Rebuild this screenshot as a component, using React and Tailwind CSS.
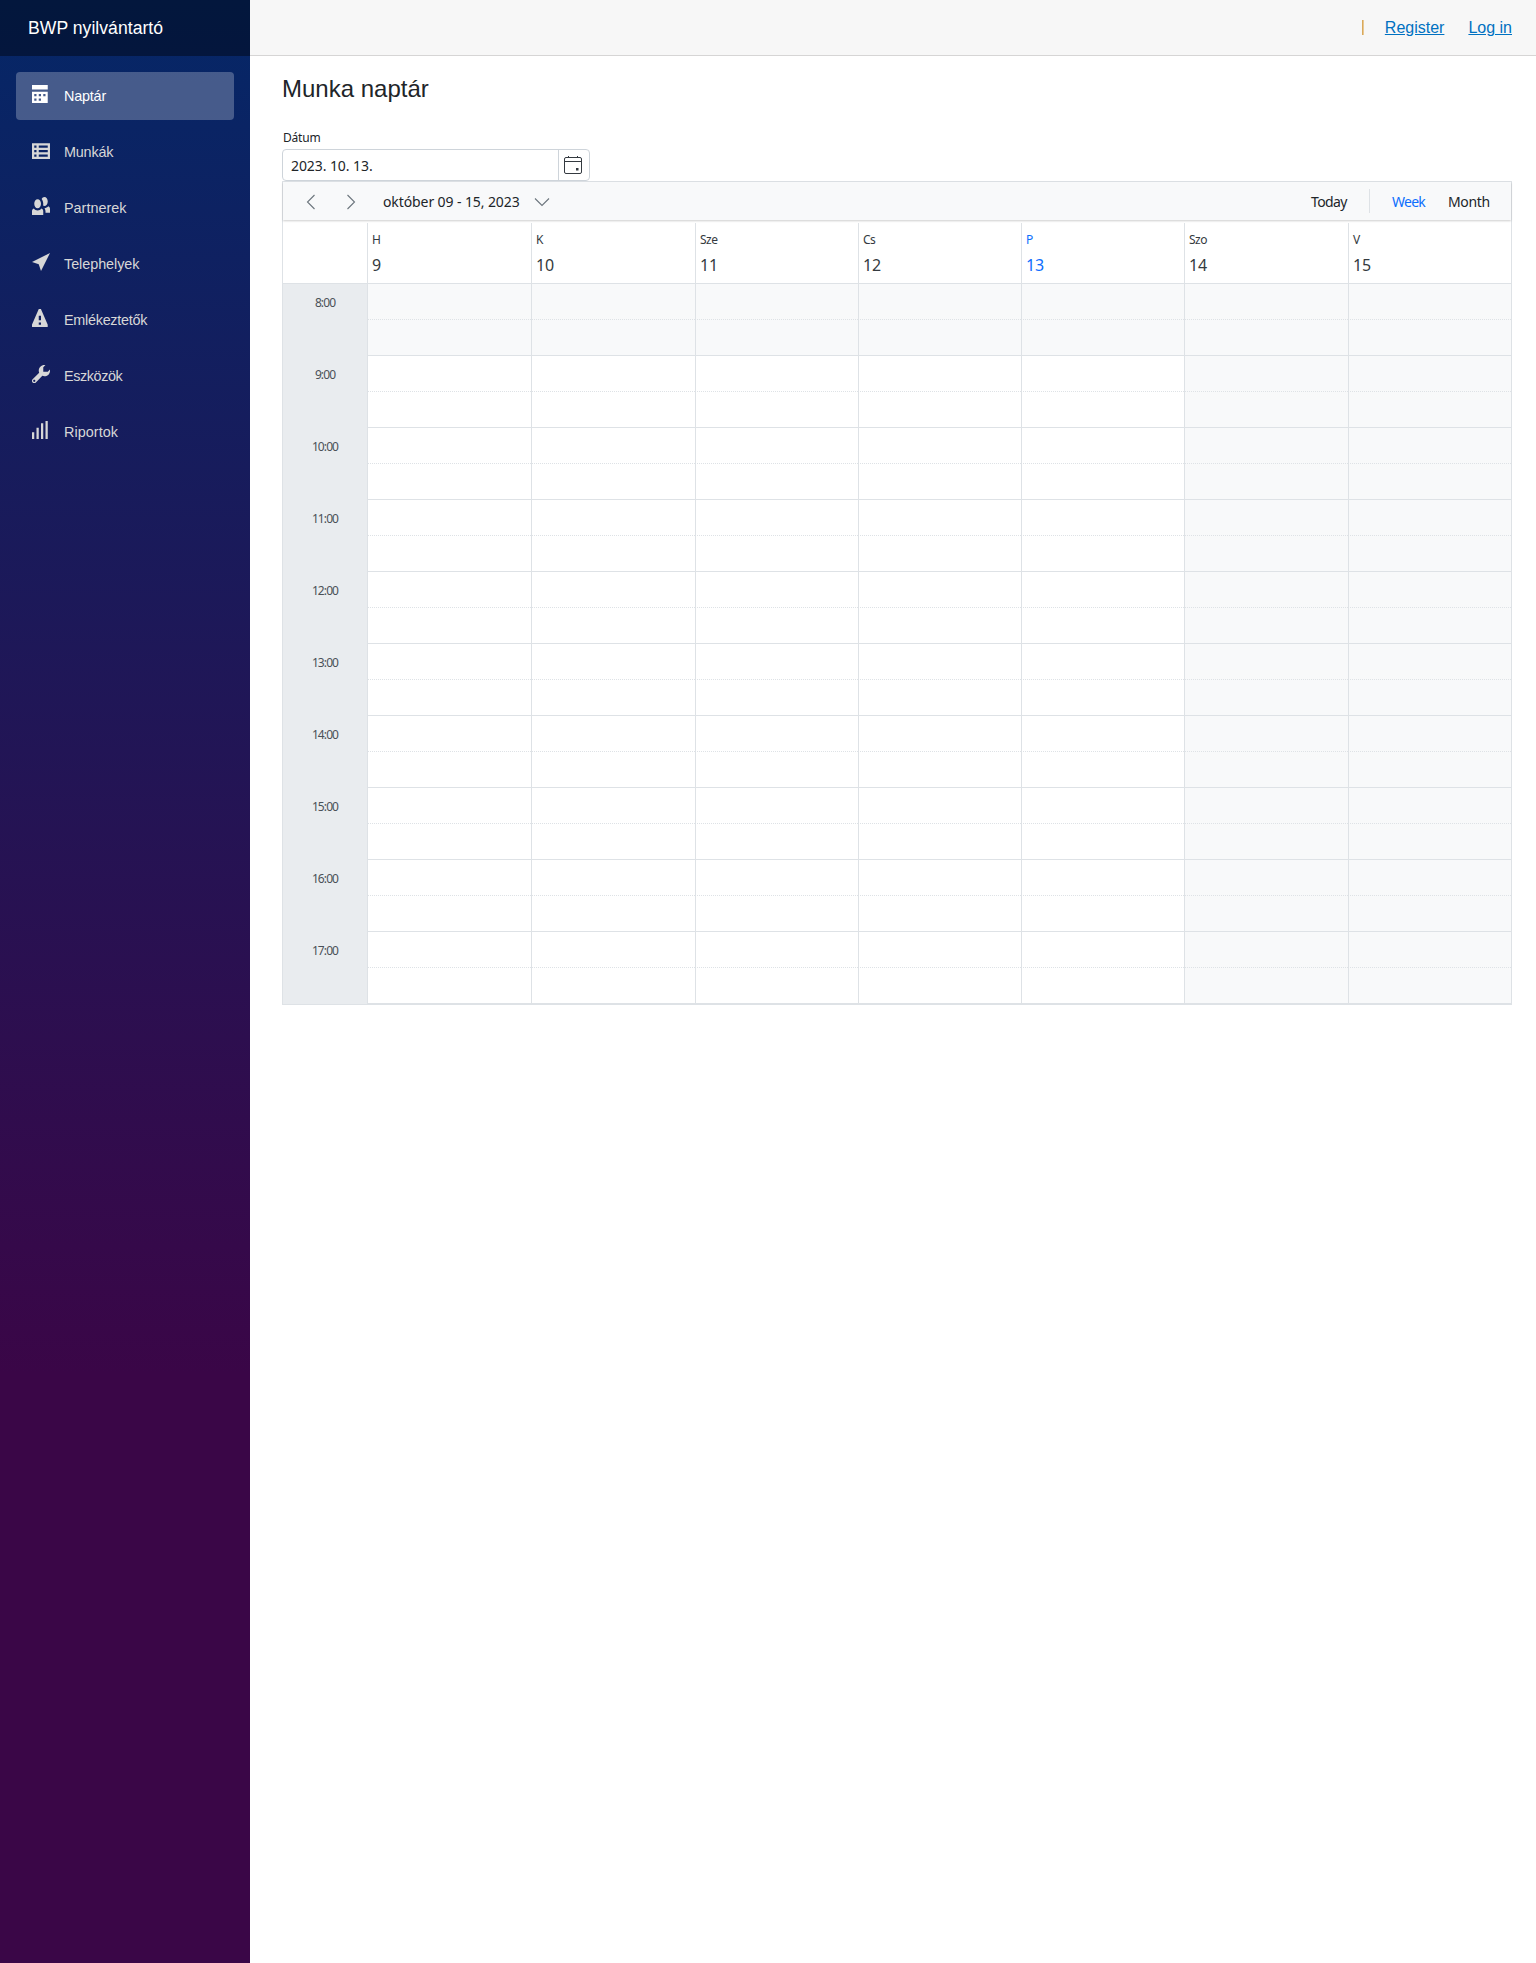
const SANS = "font-['Liberation_Sans',Arial,sans-serif]";

function Icon({ name }) {
  const common = { viewBox: "0 0 8 8", fill: "currentColor", className: "block h-[18px] w-[18px]" };
  switch (name) {
    case "calendar":
      return <svg {...common}><path d="M0 0v2h7v-2h-7zm0 3v4.91c0 .05.04.09.09.09h6.81c.05 0 .09-.04.09-.09v-4.91h-7zm1 1h1v1h-1v-1zm2 0h1v1h-1v-1zm2 0h1v1h-1v-1zm-4 2h1v1h-1v-1zm2 0h1v1h-1v-1z" /></svg>;
    case "list":
      return <svg {...common}><path transform="translate(0 1)" d="M.09 0c-.06 0-.09.04-.09.09v6.81c0 .05.04.09.09.09h7.81c.05 0 .09-.04.09-.09v-6.81c0-.06-.04-.09-.09-.09h-7.81zm.91 1h1v1h-1v-1zm2 0h4v1h-4v-1zm-2 2h1v1h-1v-1zm2 0h4v1h-4v-1zm-2 2h1v1h-1v-1zm2 0h4v1h-4v-1z" /></svg>;
    case "people":
      return <svg {...common}><path d="M5.5 0c-.51 0-.95.35-1.22.88.45.54.72 1.28.72 2.13 0 .29-.03.55-.09.81.19.11.38.19.59.19.83 0 1.5-.9 1.5-2s-.67-2-1.5-2zm-3 1c-.83 0-1.5.9-1.5 2s.67 2 1.5 2 1.5-.9 1.5-2-.67-2-1.5-2zm4.75 3.16c-.43.51-1.02.82-1.69.84.27.38.44.84.44 1.34v.66h2v-1.66c0-.52-.31-.97-.75-1.19zm-6.5 1c-.44.22-.75.67-.75 1.19v1.66h5v-1.66c0-.52-.31-.97-.75-1.19-.45.53-1.06.84-1.75.84s-1.3-.32-1.75-.84z" /></svg>;
    case "location":
      return <svg {...common}><path d="M8 0l-8 4 3 1 1 3 4-8z" /></svg>;
    case "warning":
      return <svg {...common}><path d="M3.09 0c-.06 0-.1.04-.13.09l-2.94 6.81c-.02.05-.03.13-.03.19v.81c0 .05.04.09.09.09h6.81c.05 0 .09-.04.09-.09v-.81c0-.05-.01-.14-.03-.19l-2.94-6.81c-.02-.05-.07-.09-.13-.09h-.81zm-.09 3h1v2h-1v-2zm0 3h1v1h-1v-1z" /></svg>;
    case "wrench":
      return <svg {...common}><path d="M5.5 0c-1.38 0-2.5 1.12-2.5 2.5 0 .32.08.62.19.91l-2.91 2.88c-.39.39-.39 1.05 0 1.44.2.2.46.28.72.28.26 0 .52-.09.72-.28l2.88-2.91c.28.11.58.19.91.19 1.38 0 2.5-1.12 2.5-2.5 0-.16 0-.32-.03-.47l-.97.97h-2v-2l.97-.97c-.15-.03-.31-.03-.47-.03zm-4.5 6.5c.28 0 .5.22.5.5s-.22.5-.5.5-.5-.22-.5-.5.22-.5.5-.5z" /></svg>;
    default:
      return <svg {...common}><path d="M6 0v8h1v-8h-1zm-2 1v7h1v-7h-1zm-2 2v5h1v-5h-1zm-2 2v3h1v-3h-1z" /></svg>;
  }
}

const NAV = [
  ["calendar", "Naptár", "tracking-[-0.2px]"],
  ["list", "Munkák", "tracking-[-0.2px]"],
  ["people", "Partnerek", ""],
  ["location", "Telephelyek", "tracking-[-0.05px]"],
  ["warning", "Emlékeztetők", "tracking-[-0.27px]"],
  ["wrench", "Eszközök", "tracking-[-0.4px]"],
  ["chart", "Riportok", "tracking-[0.05px]"],
];

const DAYS = [["H", 9], ["K", 10], ["Sze", 11], ["Cs", 12], ["P", 13], ["Szo", 14], ["V", 15]];
const HOURS = [8, 9, 10, 11, 12, 13, 14, 15, 16, 17];
const COLS = "grid grid-cols-[164px_164px_163px_163px_163px_164px_163px]";

function Sidebar() {
  return (
    <aside className={`h-[1963px] w-[250px] shrink-0 bg-[linear-gradient(180deg,#052767_0%,#3a0647_70%)] ${SANS}`}>
      <div className="flex h-14 items-center bg-black/40 pl-7 text-[17.6px] tracking-[0.03px] text-white">BWP nyilvántartó</div>
      <nav className="flex flex-col gap-2 px-4 pt-4">
        {NAV.map(([icon, label, tracking], i) => (
          <a
            key={label}
            className={`flex h-12 items-center rounded pl-4 text-[14.4px] ${i === 0 ? "bg-white/25 text-white" : "text-[#d7d7d7]"}`}
          >
            <span className="-mt-[4px] w-8">
              <Icon name={icon} />
            </span>
            <span className={`pt-[2px] ${tracking}`}>{label}</span>
          </a>
        ))}
      </nav>
    </aside>
  );
}

function TopBar() {
  return (
    <header className={`flex h-14 items-center justify-end border-b border-[#d6d5d5] bg-[#f7f7f7] pr-6 text-base text-[#0071c1] ${SANS}`}>
      <span className="mr-[21px] h-[15px] w-[2px] border-r border-[#e8c894] bg-[#d9a95b]" />
      <a className="mr-6 underline">Register</a>
      <a className="underline">Log in</a>
    </header>
  );
}

function DatePicker() {
  return (
    <div>
      <label className="ml-px block h-4 pt-px text-[12px] leading-4 tracking-[-0.2px] text-[#212529]">Dátum</label>
      <div className="mt-[4px] flex h-8 w-[308px] rounded-[4px] border border-[#ced4da] bg-white">
        <div className="flex-1 pl-2 text-[14px] leading-8 tracking-[-0.08px] text-[#212529]">2023. 10. 13.</div>
        <div className="flex w-[31px] items-center border-l border-[#ced4da] pl-[5px] text-[#343a40]">
          <svg viewBox="0 0 18 18" className="h-[18px] w-[18px]" fill="none" stroke="currentColor">
            <rect x="0.5" y="1.5" width="17" height="16" rx="1.5" />
            <path d="M0.5 5.5h17M4.5 0v2M13.5 0v2" />
            <rect x="12" y="12" width="2.5" height="2.5" fill="currentColor" stroke="none" />
          </svg>
        </div>
      </div>
    </div>
  );
}

function Chevron({ d, className }) {
  return (
    <svg viewBox="0 0 16 16" className={`h-4 w-4 ${className}`} fill="none" stroke="#6c757d" strokeWidth="1.1">
      <path d={d} />
    </svg>
  );
}

function Toolbar() {
  return (
    <div className="relative flex h-[38px] items-center bg-[#f8f9fa] text-[14px] text-[#212529] shadow-[0_1px_2px_rgba(0,0,0,0.2)]">
      <Chevron d="M11.5 1L4.5 8l7 7" className="ml-5 mt-px" />
      <Chevron d="M4.5 1l7 7-7 7" className="ml-6 mt-px" />
      <span className="ml-[24px] w-[137px] whitespace-nowrap pt-px tracking-[-0.1px]">október 09 - 15, 2023</span>
      <Chevron d="M1 4.5l7 7 7-7" className="ml-[14px] mt-px" />
      <span className="ml-auto w-[58px] pt-px tracking-[-0.6px]">Today</span>
      <span className="h-6 w-px bg-[#dee2e6]" />
      <span className="ml-[22px] w-[56px] pt-px tracking-[-0.75px] text-[#0d6efd]">Week</span>
      <span className="w-[63px] pt-px tracking-[-0.35px]">Month</span>
    </div>
  );
}

function Schedule() {
  return (
    <section className="w-[1230px] border border-[#dee2e6]">
      <Toolbar />
      <div className="flex h-[64px] border-b border-[#dee2e6] pt-[3px]">
        <div className="w-[84px]" />
        <div className={COLS}>
          {DAYS.map(([name, num]) => (
            <div key={name} className={`border-l border-[#dee2e6] pl-1 ${num === 13 ? "text-[#0d6efd]" : "text-[#343a40]"}`}>
              <div className="mt-[8px] text-[12px] leading-[18px] tracking-[-0.5px]">{name}</div>
              <div className="mt-[4px] text-[16px] leading-6 tracking-[-0.1px]">{num}</div>
            </div>
          ))}
        </div>
      </div>
      <div className="flex">
        <div className="w-[84px] bg-[#e9ecef]">
          {HOURS.map((h) => (
            <div key={h} className="h-[72px] pt-[10px] text-center text-[12px] leading-[18px] tracking-[-0.9px] text-[#495057]">{h}:00</div>
          ))}
        </div>
        <div>
          {HOURS.map((h) => (
            <div key={h} className={COLS}>
              {DAYS.map(([name, num]) => (
                <div key={name} className={`h-[72px] ${h === 8 || num > 13 ? "bg-[#f8f9fa]" : "bg-white"}`}>
                  <div className="h-9 border-b border-l border-[#dee2e6] [border-bottom-style:dotted]" />
                  <div className="h-9 border-b border-l border-[#dee2e6]" />
                </div>
              ))}
            </div>
          ))}
        </div>
      </div>
    </section>
  );
}

export default function App() {
  return (
    <div className="flex h-[1963px] w-[1536px] overflow-hidden bg-white">
      <Sidebar />
      <main className="min-w-0 flex-1">
        <TopBar />
        <div className="pl-8 font-['Noto_Sans','Open_Sans',sans-serif]">
          <h1 className={`pt-[18px] text-[24px] leading-[29px] text-[#212529] ${SANS}`}>Munka naptár</h1>
          <div className="pt-[26px]">
            <DatePicker />
            <Schedule />
          </div>
        </div>
      </main>
    </div>
  );
}
